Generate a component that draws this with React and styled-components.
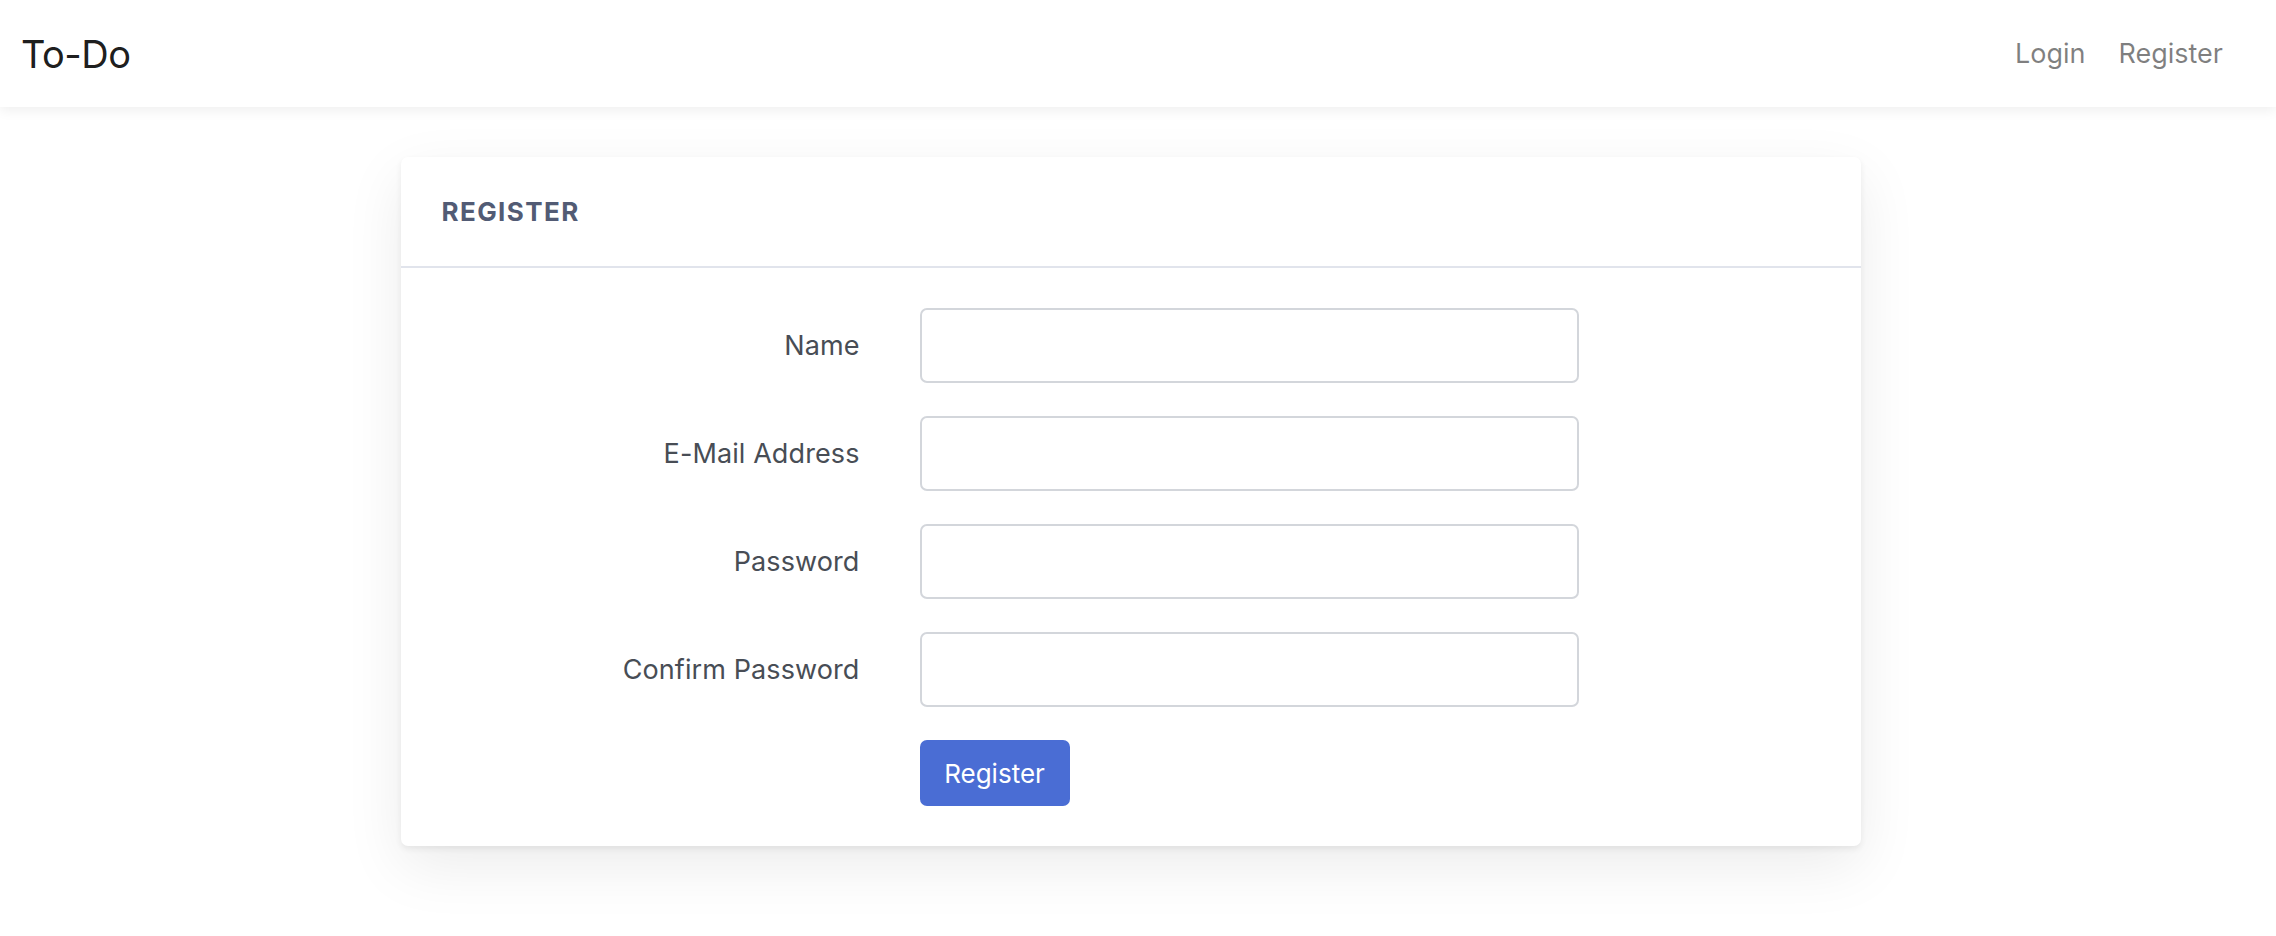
import React from 'react'
import styled, { createGlobalStyle } from 'styled-components'

const fields = [
  { id: 'name', label: 'Name', type: 'text' },
  { id: 'email', label: 'E-Mail Address', type: 'email' },
  { id: 'password', label: 'Password', type: 'password' },
  { id: 'password_confirmation', label: 'Confirm Password', type: 'password' },
]

export default function App() {
  return (
    <>
      <GlobalStyle />
      <Navbar>
        <Brand href="#">To-Do</Brand>
        <NavLinks>
          <NavLink href="#">Login</NavLink>
          <NavLink href="#">Register</NavLink>
        </NavLinks>
      </Navbar>
      <Main>
        <Card>
          <CardHeader>Register</CardHeader>
          <CardBody>
            {fields.map(f => (
              <FormRow key={f.id}>
                <Label htmlFor={f.id}>{f.label}</Label>
                <Input id={f.id} type={f.type} />
              </FormRow>
            ))}
            <FormRow>
              <span />
              <div>
                <Button type="button">Register</Button>
              </div>
            </FormRow>
          </CardBody>
        </Card>
      </Main>
    </>
  )
}

////// STYLED COMPONENTS //////
const GlobalStyle = createGlobalStyle`
  html, body {
    min-height: 100vh;
  }
  body {
    margin: 0;
    background: #ffffff;
    font-family: Inter, "Liberation Sans", sans-serif;
  }
  * { box-sizing: border-box; }
`
const Navbar = styled.nav`
  display: flex;
  align-items: center;
  justify-content: space-between;
  height: 107px;
  padding: 0 53px 0 21px;
  background: #ffffff;
  box-shadow: 0 3px 12px rgba(0, 0, 0, 0.07);
  position: relative;
  z-index: 1;
`
const Brand = styled.a`
  font-size: 38px;
  letter-spacing: -0.5px;
  color: rgba(0, 0, 0, 0.9);
  text-decoration: none;
`
const NavLinks = styled.div`
  display: flex;
  gap: 33px;
`
const NavLink = styled.a`
  font-size: 27px;
  color: rgba(0, 0, 0, 0.5);
  text-decoration: none;
`
const Main = styled.main`
  display: flex;
  justify-content: center;
  padding: 50px 15px 120px 0;
`
const Card = styled.div`
  width: 1460px;
  background: #ffffff;
  border-radius: 7px;
  box-shadow: 0 3px 6px rgba(0, 0, 0, 0.07), 0 20px 60px rgba(0, 0, 0, 0.08);
`
const CardHeader = styled.div`
  display: flex;
  align-items: center;
  height: 111px;
  padding: 0 41px;
  border-bottom: 2px solid #e1e4ec;
  font-size: 26px;
  font-weight: 700;
  letter-spacing: 1.4px;
  text-transform: uppercase;
  color: #525b74;
`
const CardBody = styled.div`
  display: grid;
  row-gap: 33px;
  padding: 40px 0;
`
const FormRow = styled.div`
  display: grid;
  grid-template-columns: 459px 659px;
  column-gap: 60px;
  align-items: center;
`
const Label = styled.label`
  text-align: right;
  font-size: 27px;
  letter-spacing: 0.1px;
  color: #484d55;
`
const Input = styled.input`
  height: 75px;
  width: 100%;
  border: 2px solid #d3d6db;
  border-radius: 7px;
  padding: 0 18px;
  font-size: 26px;
  font-family: inherit;
  outline: none;
`
const Button = styled.button`
  height: 66px;
  width: 150px;
  border: none;
  border-radius: 7px;
  background: #4a6dd4;
  color: #ffffff;
  font-family: inherit;
  font-size: 26px;
  cursor: pointer;
`
